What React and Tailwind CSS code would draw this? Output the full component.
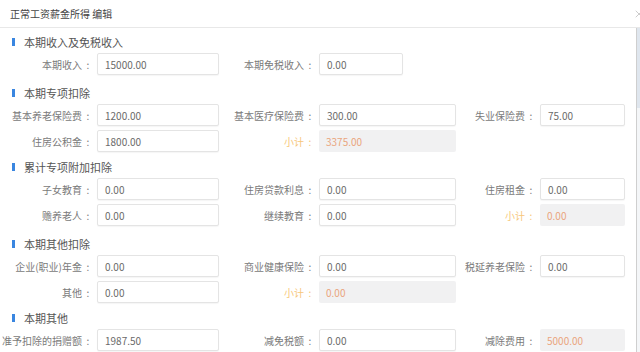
import { X } from 'lucide-react'

const font = { fontFamily: '"Noto Sans CJK SC", "Noto Sans", sans-serif' }

function Field({ label, value, lw, iw, sub, ro }) {
  return (
    <div className="flex items-center shrink-0">
      <div
        className={`flex justify-end items-center pr-[3px] text-[10px] whitespace-nowrap ${sub ? 'text-[#f7c77a]' : 'text-[#7a7a7a]'}`}
        style={{ width: lw }}
      >
        <span>{label}</span>
        <span className="w-[12px] text-center">:</span>
      </div>
      <div
        className={`h-[22px] flex items-center pl-[7px] text-[10px] rounded-[2px] ${
          ro ? 'bg-[#f1f1f2] text-[#eaa57e]' : 'bg-white border border-[#e4e4e4] shadow-[0_1px_1px_rgba(0,0,0,0.04)] text-[#6a6a6a]'
        }`}
        style={{ width: iw }}
      >
        {value}
      </div>
    </div>
  )
}

function Title({ children, mt }) {
  return (
    <div className={`flex items-center h-[16px] ${mt}`}>
      <span className="ml-[12px] w-[3px] h-[8px] bg-[#3a86e0]" />
      <span className="ml-[9px] text-[11px] text-[#555]">{children}</span>
    </div>
  )
}

const C1 = [97, 122]
const C2 = [100, 137]
const C3 = [84, 85]

export default function App() {
  return (
    <div className="w-[640px] h-[352px] bg-white flex flex-col overflow-hidden" style={font}>
      {/* 头部 */}
      <header className="h-[28px] shrink-0 border-b border-[#e8e8e8] flex items-center justify-between">
        <span className="ml-[10px] text-[10px] text-[#444]">正常工资薪金所得 编辑</span>
        <X className="w-[12px] h-[12px] text-[#aaa] mr-[-5px]" strokeWidth={1.2} />
      </header>

      <div className="flex-1 flex min-h-0">
        <main className="flex-1 flex flex-col">
          <Title mt="mt-[6px]">本期收入及免税收入</Title>
          <div className="mt-[3px] flex">
            <Field label="本期收入" value="15000.00" lw={C1[0]} iw={C1[1]} />
            <Field label="本期免税收入" value="0.00" lw={C2[0]} iw={84} />
          </div>

          <Title mt="mt-[10px]">本期专项扣除</Title>
          <div className="mt-[3px] flex flex-col gap-[4px]">
            <div className="flex">
              <Field label="基本养老保险费" value="1200.00" lw={C1[0]} iw={C1[1]} />
              <Field label="基本医疗保险费" value="300.00" lw={C2[0]} iw={C2[1]} />
              <Field label="失业保险费" value="75.00" lw={C3[0]} iw={C3[1]} />
            </div>
            <div className="flex">
              <Field label="住房公积金" value="1800.00" lw={C1[0]} iw={C1[1]} />
              <Field label="小计" value="3375.00" lw={C2[0]} iw={C2[1]} sub ro />
            </div>
          </div>

          <Title mt="mt-[7px]">累计专项附加扣除</Title>
          <div className="mt-[3px] flex flex-col gap-[4px]">
            <div className="flex">
              <Field label="子女教育" value="0.00" lw={C1[0]} iw={C1[1]} />
              <Field label="住房贷款利息" value="0.00" lw={C2[0]} iw={C2[1]} />
              <Field label="住房租金" value="0.00" lw={C3[0]} iw={C3[1]} />
            </div>
            <div className="flex">
              <Field label="赡养老人" value="0.00" lw={C1[0]} iw={C1[1]} />
              <Field label="继续教育" value="0.00" lw={C2[0]} iw={C2[1]} />
              <Field label="小计" value="0.00" lw={C3[0]} iw={C3[1]} sub ro />
            </div>
          </div>

          <Title mt="mt-[10px]">本期其他扣除</Title>
          <div className="mt-[3px] flex flex-col gap-[4px]">
            <div className="flex">
              <Field label="企业(职业)年金" value="0.00" lw={C1[0]} iw={C1[1]} />
              <Field label="商业健康保险" value="0.00" lw={C2[0]} iw={C2[1]} />
              <Field label="税延养老保险" value="0.00" lw={C3[0]} iw={C3[1]} />
            </div>
            <div className="flex">
              <Field label="其他" value="0.00" lw={C1[0]} iw={C1[1]} />
              <Field label="小计" value="0.00" lw={C2[0]} iw={C2[1]} sub ro />
            </div>
          </div>

          <Title mt="mt-[7px]">本期其他</Title>
          <div className="mt-[3px] flex">
            <Field label="准予扣除的捐赠额" value="1987.50" lw={C1[0]} iw={C1[1]} />
            <Field label="减免税额" value="0.00" lw={C2[0]} iw={C2[1]} />
            <Field label="减除费用" value="5000.00" lw={C3[0]} iw={C3[1]} ro />
          </div>
        </main>

        {/* 滚动条 */}
        <div className="w-[4px] shrink-0 border-l border-[#cfcfcf] bg-[#f4f6f8] flex flex-col">
          <div className="h-[80px] bg-[#dfe6ee]" />
        </div>
      </div>
    </div>
  )
}
